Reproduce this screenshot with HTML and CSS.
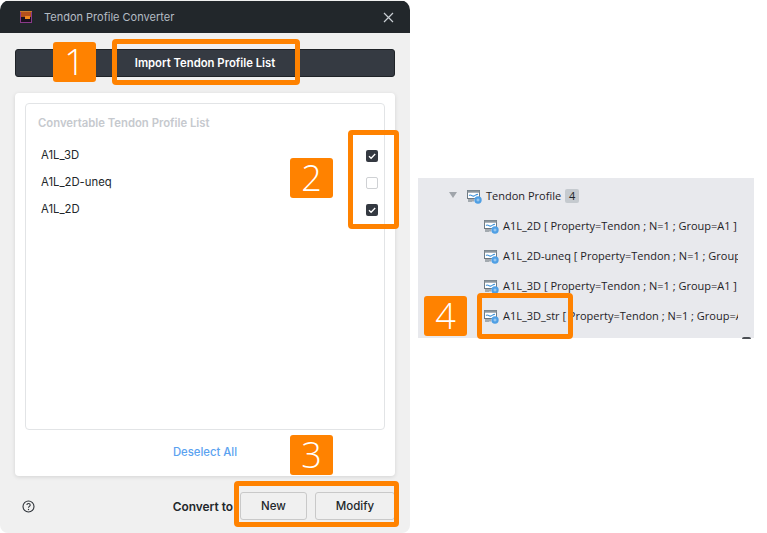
FILE: index.html
```html
<!DOCTYPE html>
<html lang="en">
<head>
<meta charset="utf-8">
<title>Tendon Profile Converter</title>
<link rel="stylesheet" href="styles.css">
</head>
<body>
<svg class="defs" width="0" height="0" aria-hidden="true">
  <symbol id="tendon" viewBox="0 0 15 15">
    <rect x="0.5" y="1.5" width="12" height="8" fill="#fff" stroke="#6f7a83"/>
    <rect x="0.5" y="1.5" width="12" height="2.200" fill="#8c969e"/>
    <path d="M2 6.500c2-2 3 1.500 5 .5s2.500-2 4-1.500" fill="none" stroke="#3f93dc" stroke-width="1.100"/>
    <path d="M2 9.500v3.500M4 9.500v3.500M6 9.500v3" stroke="#5f6a73" stroke-width="1"/>
    <circle cx="11" cy="11" r="3.700" fill="#4f9fe4"/>
    <path d="M9.500 11h3M11 9.500v3" stroke="#bcdcf6" stroke-width="0.800"/>
  </symbol>
</svg>
<main class="page">
  <section class="dialog">
    <header class="titlebar">
      <svg class="app-icon" width="12" height="12" viewBox="0 0 12 12" aria-hidden="true">
        <rect width="12" height="12" fill="#8a3a8a"/>
        <rect x="1" y="1" width="10" height="10" fill="#1d1020"/>
        <rect x="1" y="1" width="10" height="5" fill="#b5501c"/>
        <rect x="5" y="5" width="5" height="3" fill="#f08a20"/>
        <rect x="0" y="0" width="12" height="1" fill="#c87a30"/>
      </svg>
      <span class="title">Tendon Profile Converter</span>
      <svg class="close" width="11" height="11" viewBox="0 0 11 11" aria-hidden="true">
        <path d="M1 1l9 9M10 1l-9 9" stroke="#c9ced3" stroke-width="1.200" fill="none"/>
      </svg>
    </header>
    <div class="body">
      <button class="import" type="button">Import Tendon Profile List</button>
      <div class="card">
        <div class="list-box">
          <h2 class="list-title">Convertable Tendon Profile List</h2>
          <ul class="list">
            <li class="item"><span class="label">A1L_3D</span><span class="check on"><svg width="12" height="12" viewBox="0 0 12 12" aria-hidden="true"><path d="M3 6.200l2.100 2.100L9.200 4" fill="none" stroke="#fff" stroke-width="1.300"/></svg></span></li>
            <li class="item"><span class="label">A1L_2D-uneq</span><span class="check"></span></li>
            <li class="item"><span class="label">A1L_2D</span><span class="check on"><svg width="12" height="12" viewBox="0 0 12 12" aria-hidden="true"><path d="M3 6.200l2.100 2.100L9.200 4" fill="none" stroke="#fff" stroke-width="1.300"/></svg></span></li>
          </ul>
        </div>
        <div class="deselect">Deselect All</div>
      </div>
      <footer class="foot">
        <svg class="help" width="13" height="13" viewBox="0 0 13 13" aria-hidden="true">
          <circle cx="6.500" cy="6.500" r="5.500" fill="none" stroke="#2f343a" stroke-width="1.100"/>
          <path d="M4.900 5.100c0-2.100 3.300-2.100 3.300 0 0 1.300-1.700 1.200-1.700 2.600" fill="none" stroke="#2f343a" stroke-width="1.100"/>
          <circle cx="6.500" cy="9.500" r="0.700" fill="#2f343a"/>
        </svg>
        <span class="convert">Convert to</span>
        <button class="btn btn-new" type="button">New</button>
        <button class="btn btn-modify" type="button">Modify</button>
      </footer>
    </div>
  </section>

  <section class="tree">
    <div class="tree-clip">
      <div class="row row-head">
        <span class="arrow"></span>
        <svg class="ticon" width="15" height="15" aria-hidden="true"><use href="#tendon"/></svg>
        <span class="tlabel">Tendon Profile</span><span class="count">4</span>
      </div>
      <div class="row row-child"><svg class="ticon" width="15" height="15" aria-hidden="true"><use href="#tendon"/></svg><span class="tlabel">A1L_2D [ Property=Tendon ; N=1 ; Group=A1 ]</span></div>
      <div class="row row-child"><svg class="ticon" width="15" height="15" aria-hidden="true"><use href="#tendon"/></svg><span class="tlabel">A1L_2D-uneq [ Property=Tendon ; N=1 ; Group=A1 ]</span></div>
      <div class="row row-child"><svg class="ticon" width="15" height="15" aria-hidden="true"><use href="#tendon"/></svg><span class="tlabel">A1L_3D [ Property=Tendon ; N=1 ; Group=A1 ]</span></div>
      <div class="row row-child"><svg class="ticon" width="15" height="15" aria-hidden="true"><use href="#tendon"/></svg><span class="tlabel">A1L_3D_str [ Property=Tendon ; N=1 ; Group=A1 ]</span></div>
    </div>
    <span class="scroll-dot"></span>
  </section>

  <div class="mark box-1"></div>
  <div class="mark box-2"></div>
  <div class="mark box-3"></div>
  <div class="mark box-4"></div>
  <div class="badge badge-1">1</div>
  <div class="badge badge-2">2</div>
  <div class="badge badge-3">3</div>
  <div class="badge badge-4">4</div>
</main>
</body>
</html>
```
FILE: styles.css
```css
* { box-sizing: border-box; }
html, body { margin: 0; padding: 0; background: #fff; }
.defs { position: absolute; }
.page {
  position: relative;
  display: flex;
  align-items: flex-start;
  width: 767px;
  height: 533px;
  overflow: hidden;
  font-family: Inter, "Liberation Sans", sans-serif;
}
.dialog {
  flex: none;
  display: flex;
  flex-direction: column;
  width: 410px;
  height: 533px;
  padding-top: 1px;
  border-radius: 10px 10px 8px 8px;
  overflow: hidden;
  background: #f0f0f0;
}
.titlebar {
  flex: none;
  display: flex;
  align-items: center;
  height: 32px;
  padding: 0 16px 0 20px;
  background: #22272b;
}
.app-icon { flex: none; }
.title { flex: 1; margin-left: 12px; font-size: 11px; color: #b4bcc4; }
.body { flex: 1; display: flex; flex-direction: column; padding: 16px 15px 0; }
.import {
  flex: none;
  height: 28px;
  padding: 0;
  border: 1px solid #1f2327;
  border-radius: 3px;
  background: #353a42;
  color: #fff;
  font: 600 11.300px Inter, "Liberation Sans", sans-serif;
}
.card {
  flex: none;
  display: flex;
  flex-direction: column;
  height: 383px;
  margin-top: 16px;
  padding: 10px;
  border-radius: 4px;
  background: #fff;
  box-shadow: 0 1px 4px rgba(0, 0, 0, 0.12);
}
.list-box {
  flex: none;
  height: 327px;
  padding: 12px 6px 0 12px;
  border: 1px solid #e2e4e6;
  border-radius: 4px;
}
.list-title { margin: 0; font-size: 11.300px; line-height: 14px; font-weight: 600; color: #c6c9ce; }
.list { margin: 12px 0 0; padding: 0; list-style: none; }
.item {
  display: flex;
  align-items: center;
  justify-content: space-between;
  height: 27px;
  padding-left: 3px;
  font-size: 11.300px;
  color: #22272b;
}
.label { margin-top: -2px; }
.check {
  display: flex;
  width: 12px;
  height: 12px;
  border: 1px solid #cfd1d4;
  border-radius: 2px;
  background: #fff;
}
.check.on { border: 0; background: #343941; }
.deselect {
  flex: none;
  margin-top: 14px;
  text-align: center;
  font-size: 11.300px;
  line-height: 16px;
  font-weight: 500;
  color: #5aa2f0;
}
.foot { flex: none; display: flex; align-items: center; height: 28px; margin-top: 16px; padding-left: 7px; }
.help { flex: none; }
.convert { margin-left: auto; font-size: 11.900px; font-weight: 600; color: #22272b; }
.btn {
  flex: none;
  height: 28px;
  padding: 0;
  border: 1px solid #c9c9c9;
  border-radius: 3px;
  background: #f0f0f0;
  color: #22272b;
  font: 500 11.500px Inter, "Liberation Sans", sans-serif;
}
.btn-new { width: 67px; margin-left: 7px; }
.btn-modify { width: 80px; margin-left: 8px; }
.tree {
  position: relative;
  flex: none;
  width: 336px;
  height: 160px;
  margin: 178px 0 0 8px;
  background: #e8e9ed;
  font-family: "Open Sans", "Noto Sans", sans-serif;
  font-size: 11px;
  color: #1f2327;
}
.tree-clip { width: 320px; height: 160px; padding-top: 3px; overflow: hidden; }
.row { display: flex; align-items: center; height: 30px; white-space: nowrap; }
.row-head { padding-left: 31px; }
.row-child { padding-left: 66px; }
.ticon { flex: none; margin-right: 4px; }
.tlabel { margin-top: -2px; }
.arrow {
  flex: none;
  width: 0;
  height: 0;
  margin: -2px 10px 0 0;
  border-style: solid;
  border-width: 6px 4px 0;
  border-color: #a0a5ab transparent transparent;
}
.count {
  margin-left: 4px;
  padding: 0 4px;
  height: 14px;
  line-height: 14px;
  border-radius: 2px;
  background: #c5cacf;
}
.scroll-dot {
  position: absolute;
  right: 3px;
  bottom: -1px;
  width: 9px;
  height: 2px;
  border-radius: 5px 5px 0 0;
  background: #4b4f54;
}
.mark { position: absolute; border: 5px solid #ff8200; border-radius: 4px; }
.box-1 { left: 112px; top: 39px; width: 188px; height: 46px; }
.box-2 { left: 348px; top: 130px; width: 51px; height: 99px; }
.box-3 { left: 234px; top: 481px; width: 165px; height: 46px; }
.box-4 { left: 477px; top: 293px; width: 96px; height: 46px; }
.badge {
  position: absolute;
  width: 43px;
  height: 40px;
  border-radius: 3px;
  background: #ff8200;
  color: #fff;
  text-align: center;
  font-family: "Open Sans", "Liberation Sans", sans-serif;
  font-weight: 300;
  font-size: 36px;
  line-height: 40px;
}
.badge-1 { left: 53px; top: 42px; }
.badge-2 { left: 290px; top: 158px; }
.badge-3 { left: 290px; top: 435px; }
.badge-4 { left: 424px; top: 296px; }
```
